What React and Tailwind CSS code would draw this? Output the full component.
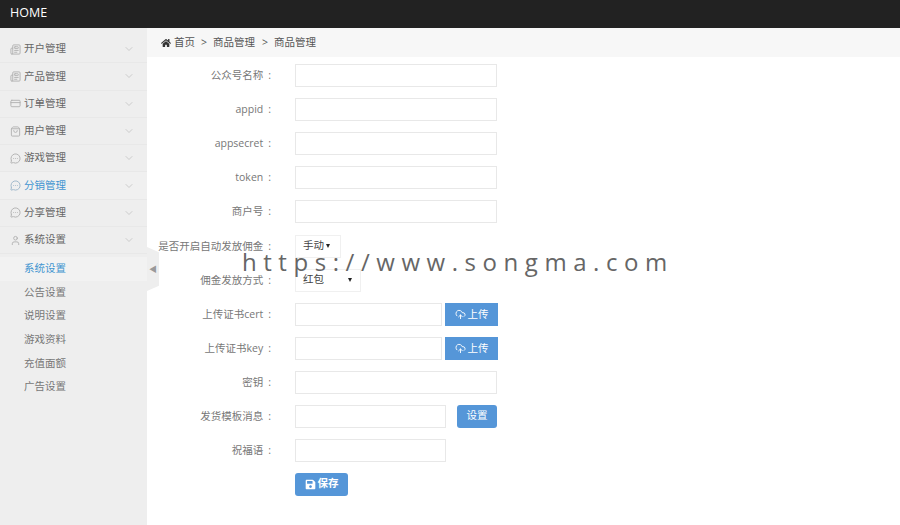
import React from "react";
import { ChevronDown, CloudUpload, Newspaper, CreditCard, ShoppingBag, MessageCircleMore, User } from "lucide-react";
import { FaHome, FaSave } from "react-icons/fa";

const FONT = "font-['Open_Sans','Noto_Sans_CJK_SC',sans-serif]";

const menu = [
  ["开户管理", Newspaper],
  ["产品管理", Newspaper],
  ["订单管理", CreditCard],
  ["用户管理", ShoppingBag],
  ["游戏管理", MessageCircleMore],
  ["分销管理", MessageCircleMore, true],
  ["分享管理", MessageCircleMore],
  ["系统设置", User],
];
const sub = ["系统设置", "公告设置", "说明设置", "游戏资料", "充值面额", "广告设置"];

function Row({ label, children, className = "" }) {
  return (
    <div className={`flex items-center h-[34px] ${className}`}>
      <div className="w-[125px] text-right text-[10.5px] text-[#777] whitespace-nowrap pt-[2px] pr-[1px]">
        {label}
        {label && <span className="ml-[5px]">:</span>}
      </div>
      <div className="ml-[23px] flex items-center">{children}</div>
    </div>
  );
}

const Input = ({ w = "w-[202px]" }) => (
  <div className={`${w} h-[23px] bg-white border border-[#e8e8e8]`} />
);

const UploadBtn = () => (
  <button className="ml-[3px] mt-[1px] w-[53px] h-[23px] bg-[#5596d8] text-white text-[10.5px] flex items-center justify-center gap-[2px]">
    <CloudUpload size={11} />上传
  </button>
);

const Select = ({ w, text, arrow }) => (
  <div className={`${w} h-[23px] bg-white border border-[#f0f0f0] relative text-[10.5px] text-[#444] flex items-center pl-[7px]`}>
    {text}
    <span className={`absolute top-[8px] ${arrow} w-0 h-0 border-x-[2.5px] border-x-transparent border-t-[4px] border-t-[#222]`} />
  </div>
);

export default function App() {
  return (
    <div className={`relative w-[900px] h-[525px] overflow-hidden bg-white ${FONT}`}>
      <header className="h-[28px] bg-[#222222] text-white text-[12.5px] flex items-center pl-[10px] pb-[2px]">HOME</header>
      <div className="flex h-[497px]">
        <aside className="relative w-[147px] bg-[#eeeeee] pt-[8px] shrink-0">
          {menu.map(([t, Icon, active]) => (
            <div key={t} className={`h-[27.3px] flex items-center pl-[10px] pr-[12px] border-b border-[#e8e8e8] text-[10.5px] ${active ? "text-[#3f94d0] bg-[#f0f0f0]" : "text-[#666]"}`}>
              <Icon size={11} className={active ? "text-[#9bb6c9]" : "text-[#b0b0b0]"} />
              <span className="ml-[3px]">{t}</span>
              <ChevronDown size={12} className="ml-auto text-[#cccccc]" />
            </div>
          ))}
          <div className="pt-[3px]">
            {sub.map((t, i) => (
              <div key={t} className={`h-[23.6px] flex items-center pl-[24px] text-[10.5px] ${i === 0 ? "text-[#3f94d0] bg-[#f2f2f2]" : "text-[#777]"}`}>{t}</div>
            ))}
          </div>
          <div className="absolute left-[147px] top-[219px] w-[12px] h-[44px] bg-[#eeeeee] flex items-center justify-center [clip-path:polygon(0_0,100%_12%,100%_88%,0_100%)]">
            <span className="text-[8px] text-[#999]">◀</span>
          </div>
        </aside>
        <main className="flex-1">
          <div className="h-[29px] bg-[#f7f7f7] flex items-center pl-[14px] text-[10.5px] text-[#555]">
            <FaHome size={10} className="text-[#333]" />
            <span className="ml-[3px]">首页</span>
            <span className="mx-[6px]">&gt;</span>
            <span>商品管理</span>
            <span className="ml-[7px] mr-[6px]">&gt;</span>
            <span>商品管理</span>
          </div>
          <form className="pt-[1px]">
            <Row label="公众号名称"><Input /></Row>
            <Row label="appid"><Input /></Row>
            <Row label="appsecret"><Input /></Row>
            <Row label="token"><Input /></Row>
            <Row label="商户号"><Input /></Row>
            <Row label="是否开启自动发放佣金" className="mt-[1px]"><Select w="w-[46px]" text="手动" arrow="right-[10px]" /></Row>
            <Row label="佣金发放方式"><Select w="w-[66px]" text="红包" arrow="right-[8px]" /></Row>
            <Row label="上传证书cert"><Input w="w-[147px]" /><UploadBtn /></Row>
            <Row label="上传证书key"><Input w="w-[147px]" /><UploadBtn /></Row>
            <Row label="密钥"><Input /></Row>
            <Row label="发货模板消息">
              <Input w="w-[151px]" />
              <button className="ml-[11px] w-[40px] h-[23px] rounded-[3px] bg-[#5596d8] text-white text-[10.5px]">设置</button>
            </Row>
            <Row label="祝福语"><Input w="w-[151px]" /></Row>
            <Row label="">
              <button className="w-[53px] h-[23px] rounded-[3px] bg-[#5596d8] text-white text-[10.5px] font-semibold flex items-center justify-center gap-[2px]">
                <FaSave size={11} />保存
              </button>
            </Row>
          </form>
        </main>
      </div>
      <div className="absolute left-[242px] top-[246px] text-[24px] leading-[32px] tracking-[6.55px] text-[#666] font-['Open_Sans',sans-serif] whitespace-nowrap">https://www.songma.com</div>
    </div>
  );
}
